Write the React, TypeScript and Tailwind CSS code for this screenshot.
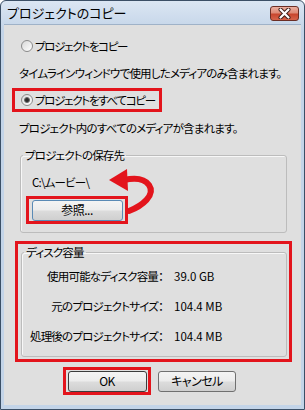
import React from "react";

const jp = "[font-family:'Noto_Sans_CJK_JP','Noto_Sans',sans-serif] [font-feature-settings:'palt']";

function Radio({ checked }: { checked?: boolean }) {
  return (
    <span className="w-[12px] h-[12px] rounded-full border border-[#8a8a8a] bg-gradient-to-br from-[#d8d8d8] to-[#ffffff] flex items-center justify-center shrink-0">
      {checked && <span className="w-[6px] h-[6px] rounded-full bg-[#2c2c2c] border border-[#6b6b6b]" />}
    </span>
  );
}

function Btn({ children, w, variant }: { children: React.ReactNode; w: string; variant?: "focus" | "default" }) {
  const border =
    variant === "focus" ? "border-[#5a8ab5]" : variant === "default" ? "border-[#3c3c3c]" : "border-[#707070]";
  return (
    <div
      className={`${w} h-[21px] rounded-[3px] border ${border} bg-[linear-gradient(#f4f4f4_0%,#ececec_48%,#dcdcdc_52%,#cfcfcf_100%)] flex items-center justify-center text-[12px] leading-none tracking-[-0.5px] text-black whitespace-nowrap`}
    >
      {children}
    </div>
  );
}

export default function App() {
  return (
    <div className={`w-[305px] h-[410px] relative flex flex-col border border-[#3b4f66] rounded-t-[6px] bg-[linear-gradient(#dbe6f3,#c3d4e8_30px,#c3d4e8)] ${jp}`}>
      <div className="h-[23px] flex items-center justify-between pl-[6px] pr-[5px] shrink-0">
        <span className="text-[13px] leading-none text-black whitespace-nowrap">プロジェクトのコピー</span>
        <div className="w-[29px] h-[15px] rounded-[3px] border border-[#6b2e25] bg-[linear-gradient(#ebae9f_0%,#de8a76_45%,#c8462e_55%,#d6644b_100%)] flex items-center justify-center mt-[1px]">
          <svg width="13" height="11" viewBox="0 0 13 11">
            <path d="M2.5 1.5 L10.5 9.5 M10.5 1.5 L2.5 9.5" stroke="#3a1a14" strokeWidth="4" strokeLinecap="round" />
            <path d="M2.5 1.5 L10.5 9.5 M10.5 1.5 L2.5 9.5" stroke="#ffffff" strokeWidth="2.2" strokeLinecap="round" />
          </svg>
        </div>
      </div>

      <div className="flex-1 mx-[3px] mb-[4px] bg-[#dfdfdf] border-t border-[#9fb2c8] flex flex-col pl-[8px] text-[11.5px] leading-[16px] tracking-[-0.8px] text-black whitespace-nowrap">
        <div className="mt-[9px] w-[150px] h-[24px] border-[3px] border-transparent flex items-center pl-[6px] gap-[2px]">
          <Radio />
          <span className="tracking-[-1.3px]">プロジェクトをコピー</span>
        </div>
        <div className="mt-[7px] ml-[7px]">タイムラインウィンドウで使用したメディアのみ含まれます。</div>
        <div className="mt-[7px] w-[150px] h-[24px] border-[3px] border-[#e3141c] flex items-center pl-[6px] gap-[2px]">
          <Radio checked />
          <span className="tracking-[-1.3px]">プロジェクトをすべてコピー</span>
        </div>
        <div className="mt-[8px] ml-[7px]">プロジェクト内のすべてのメディアが含まれます。</div>

        <fieldset className="mt-[11px] ml-[8px] w-[267px] border border-[#bcbcbc] rounded-[3px] shadow-[inset_1px_1px_0_#f7f7f7] pb-[8px]">
          <legend className="ml-[2px] px-[2px] leading-[16px]">プロジェクトの保存先</legend>
          <div className="mt-[11px] pl-[11px]">C:\ムービー\</div>
          <div className="mt-[6px] ml-[5px] w-[102px] h-[28px] border-[3px] border-[#e3141c] flex items-center justify-center">
            <Btn w="w-[91px]" variant="focus">参照...</Btn>
          </div>
        </fieldset>

        <div className="mt-[8px] ml-[3px] w-[277px] h-[121px] border-[3px] border-[#e3141c] pl-[3px]">
          <fieldset className="w-[266px] h-[113px] border border-[#bcbcbc] rounded-[3px] shadow-[inset_1px_1px_0_#f7f7f7]">
            <legend className="ml-[2px] px-[2px] leading-[16px]">ディスク容量</legend>
            <div className="mt-[8px] flex flex-col gap-[14px]">
              <div className="flex">
                <span className="w-[141px] text-right">使用可能なディスク容量：</span>
                <span className="ml-[11px] tracking-normal">39.0 GB</span>
              </div>
              <div className="flex">
                <span className="w-[141px] text-right">元のプロジェクトサイズ：</span>
                <span className="ml-[11px] tracking-normal">104.4 MB</span>
              </div>
              <div className="flex">
                <span className="w-[141px] text-right">処理後のプロジェクトサイズ：</span>
                <span className="ml-[11px] tracking-normal">104.4 MB</span>
              </div>
            </div>
          </fieldset>
        </div>

        <div className="mt-[5px] ml-[51px] flex items-center gap-[7px]">
          <div className="w-[88px] h-[28px] border-[3px] border-[#e3141c] flex items-center justify-center">
            <Btn w="w-[79px]" variant="default">OK</Btn>
          </div>
          <Btn w="w-[78px]">キャンセル</Btn>
        </div>
      </div>

      <svg className="absolute left-0 top-0 pointer-events-none" width="305" height="410" viewBox="0 0 305 410">
        <path d="M128 210 C 141 205, 155 194, 148 184 C 143 177, 132 177, 123 179" fill="none" stroke="#e3141c" strokeWidth="6" strokeLinecap="round" />
        <polygon points="108,179 126,168 127,190" fill="#e3141c" />
      </svg>
    </div>
  );
}
